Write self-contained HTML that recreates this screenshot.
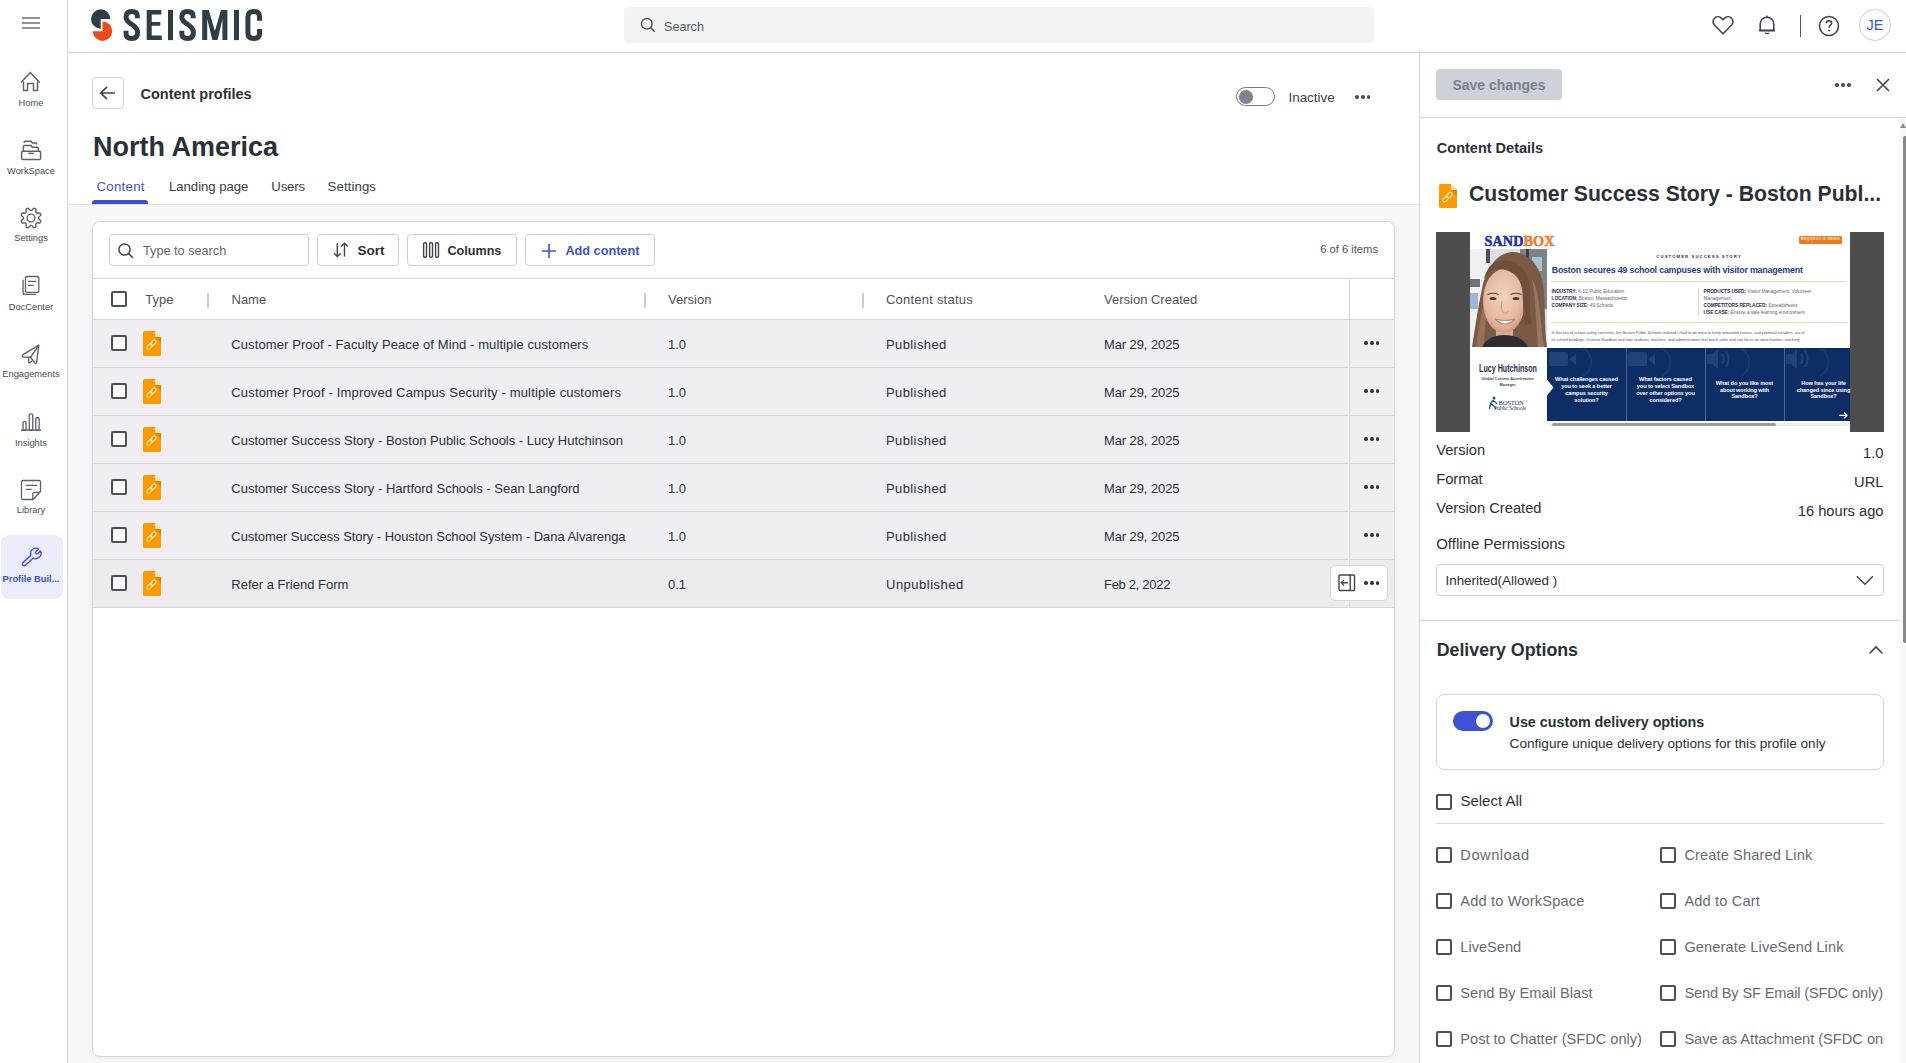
<!DOCTYPE html>
<html><head><meta charset="utf-8"><style>
html,body{margin:0;padding:0;width:1906px;height:1063px;overflow:hidden;background:#fff}
body{position:relative;font-family:"Liberation Sans", sans-serif}
.t{position:absolute;white-space:nowrap;line-height:1;font-family:"Liberation Sans", sans-serif}
svg{overflow:visible}
</style></head><body>
<div style="position:absolute;left:0px;top:0px;width:1906px;height:1063px;background:#ffffff"></div>
<div style="position:absolute;left:68px;top:205px;width:1351px;height:858px;background:#f7f8fa"></div>
<div style="position:absolute;left:67px;top:0px;width:1px;height:1063px;background:#d3d7de"></div>
<div style="position:absolute;left:68px;top:52px;width:1838px;height:1px;background:#d3d7de"></div>
<div style="position:absolute;left:68px;top:204px;width:1351px;height:1px;background:#dfe2e7"></div>
<div style="position:absolute;left:1419px;top:53px;width:1px;height:1010px;background:#d3d7de"></div>
<svg style="position:absolute;left:20px;top:12px" width="22" height="22" viewBox="0 0 22 22" fill="none"><path d="M2 6h18M2 11h18M2 16h18" stroke="#6b7178" stroke-width="1.4"/></svg>
<div style="position:absolute;left:1px;top:535px;width:62px;height:64px;background:#ebedfb;border-radius:8px"></div>
<svg style="position:absolute;left:19px;top:70px" width="24" height="24" viewBox="0 0 24 24" fill="none"><path d="M2 12.5L11.3 2.5L20.6 12.5" stroke="#5b626b" stroke-width="1.5" stroke-linejoin="miter"/><path d="M4.5 11.5V20.5H8.5V13.5H14.5V20.5H18.5V11.5" stroke="#5b626b" stroke-width="1.5"/></svg>
<svg style="position:absolute;left:19px;top:139px" width="24" height="24" viewBox="0 0 24 24" fill="none"><rect x="2.6" y="12.2" width="19" height="8.3" rx="1.3" stroke="#5b626b" stroke-width="1.5"/><path d="M9.3 14.4H14.8" stroke="#5b626b" stroke-width="1.5"/><path d="M4.4 12V7.5Q4.4 6.5 5.4 6.5H12.2L13.3 8.2H18.4Q19.2 8.2 19.2 9V12" stroke="#5b626b" stroke-width="1.4"/><path d="M5.2 4.1V3.3Q5.2 2.3 6.2 2.3H12.2L13.4 4H17Q17.7 4 17.9 5.6" stroke="#5b626b" stroke-width="1.4"/></svg>
<svg style="position:absolute;left:19px;top:206px" width="24" height="24" viewBox="0 0 24 24" fill="none"><path d="M12.00 4.45 L12.30 4.46 L12.59 4.47 L12.91 4.34 L13.29 3.83 L13.74 3.27 L14.22 2.74 L14.74 2.29 L15.17 2.25 L15.55 2.38 L15.92 2.53 L16.29 2.69 L16.65 2.87 L16.93 3.20 L16.98 3.88 L16.94 4.60 L16.86 5.31 L16.77 5.95 L16.90 6.26 L17.12 6.46 L17.34 6.66 L17.54 6.88 L17.74 7.10 L18.05 7.23 L18.69 7.14 L19.40 7.06 L20.12 7.02 L20.80 7.07 L21.13 7.35 L21.31 7.71 L21.47 8.08 L21.62 8.45 L21.75 8.83 L21.71 9.26 L21.26 9.78 L20.73 10.26 L20.17 10.71 L19.66 11.09 L19.53 11.41 L19.54 11.70 L19.55 12.00 L19.54 12.30 L19.53 12.59 L19.66 12.91 L20.17 13.29 L20.73 13.74 L21.26 14.22 L21.71 14.74 L21.75 15.17 L21.62 15.55 L21.47 15.92 L21.31 16.29 L21.13 16.65 L20.80 16.93 L20.12 16.98 L19.40 16.94 L18.69 16.86 L18.05 16.77 L17.74 16.90 L17.54 17.12 L17.34 17.34 L17.12 17.54 L16.90 17.74 L16.77 18.05 L16.86 18.69 L16.94 19.40 L16.98 20.12 L16.93 20.80 L16.65 21.13 L16.29 21.31 L15.92 21.47 L15.55 21.62 L15.17 21.75 L14.74 21.71 L14.22 21.26 L13.74 20.73 L13.29 20.17 L12.91 19.66 L12.59 19.53 L12.30 19.54 L12.00 19.55 L11.70 19.54 L11.41 19.53 L11.09 19.66 L10.71 20.17 L10.26 20.73 L9.78 21.26 L9.26 21.71 L8.83 21.75 L8.45 21.62 L8.08 21.47 L7.71 21.31 L7.35 21.13 L7.07 20.80 L7.02 20.12 L7.06 19.40 L7.14 18.69 L7.23 18.05 L7.10 17.74 L6.88 17.54 L6.66 17.34 L6.46 17.12 L6.26 16.90 L5.95 16.77 L5.31 16.86 L4.60 16.94 L3.88 16.98 L3.20 16.93 L2.87 16.65 L2.69 16.29 L2.53 15.92 L2.38 15.55 L2.25 15.17 L2.29 14.74 L2.74 14.22 L3.27 13.74 L3.83 13.29 L4.34 12.91 L4.47 12.59 L4.46 12.30 L4.45 12.00 L4.46 11.70 L4.47 11.41 L4.34 11.09 L3.83 10.71 L3.27 10.26 L2.74 9.78 L2.29 9.26 L2.25 8.83 L2.38 8.45 L2.53 8.08 L2.69 7.71 L2.87 7.35 L3.20 7.07 L3.88 7.02 L4.60 7.06 L5.31 7.14 L5.95 7.23 L6.26 7.10 L6.46 6.88 L6.66 6.66 L6.88 6.46 L7.10 6.26 L7.23 5.95 L7.14 5.31 L7.06 4.60 L7.02 3.88 L7.07 3.20 L7.35 2.87 L7.71 2.69 L8.08 2.53 L8.45 2.38 L8.83 2.25 L9.26 2.29 L9.78 2.74 L10.26 3.27 L10.71 3.83 L11.09 4.34 L11.41 4.47 L11.70 4.46Z" stroke="#5b626b" stroke-width="1.4" stroke-linejoin="round"/><circle cx="12" cy="12" r="3.9" stroke="#5b626b" stroke-width="1.4"/></svg>
<svg style="position:absolute;left:19px;top:273px" width="24" height="24" viewBox="0 0 24 24" fill="none"><rect x="6.5" y="3.5" width="13.3" height="15.8" rx="1.3" stroke="#5b626b" stroke-width="1.3"/><path d="M4.1 7.2V20.2Q4.1 21.4 5.3 21.4H16.5" stroke="#5b626b" stroke-width="1.3" stroke-linecap="round"/><path d="M9.5 8.4H16.6M9.5 12.4H14.3" stroke="#5b626b" stroke-width="1.3" stroke-linecap="round"/></svg>
<svg style="position:absolute;left:19px;top:342px" width="24" height="24" viewBox="0 0 24 24" fill="none"><path d="M19.8 3.2L3.9 12.6Q2.4 14.6 4.6 15.1L11.4 15.3L15.9 20.9Q17.1 22 17.6 20.4Z" stroke="#5b626b" stroke-width="1.4" stroke-linejoin="round"/><path d="M19.8 3.2L11.4 15.3" stroke="#5b626b" stroke-width="1.4"/><path d="M9.6 15.4V19.8Q9.9 21.2 11.2 20.4L13.4 18.7" stroke="#5b626b" stroke-width="1.4" stroke-linejoin="round"/></svg>
<svg style="position:absolute;left:19px;top:411px" width="24" height="24" viewBox="0 0 24 24" fill="none"><rect x="4.05" y="10.65" width="3.0" height="8.45" rx="0.9" stroke="#5b626b" stroke-width="1.3"/><rect x="10.25" y="2.85" width="3.5" height="16.25" rx="1.2" stroke="#5b626b" stroke-width="1.3"/><rect x="16.85" y="6.75" width="3.3" height="12.35" rx="1" stroke="#5b626b" stroke-width="1.3"/><path d="M2 19.1H22" stroke="#5b626b" stroke-width="1.5"/></svg>
<svg style="position:absolute;left:19px;top:478px" width="24" height="24" viewBox="0 0 24 24" fill="none"><path d="M4 2.5H20Q21.5 2.5 21.5 4V13.5L14.1 21.5H4Q2.5 21.5 2.5 20V4Q2.5 2.5 4 2.5Z" stroke="#5b626b" stroke-width="1.3" stroke-linejoin="round"/><path d="M13.8 21V15.8Q13.8 14.3 15.3 14.3H21" stroke="#5b626b" stroke-width="1.3"/><path d="M7.2 7.4H17.8M7.2 11.4H12.2" stroke="#5b626b" stroke-width="1.3" stroke-linecap="round"/></svg>
<svg style="position:absolute;left:19px;top:546px" width="24" height="24" viewBox="0 0 24 24" fill="none"><g transform="translate(16.8 7.4) rotate(137.8)"><path d="M4.88 -1.8 L15.7 -1.8 A1.8 1.8 0 0 1 15.7 1.8 L4.88 1.8 A5.2 5.2 0 0 1 -5.0 1.4 L-1.4 1.4 A1.4 1.4 0 1 0 -1.4 -1.4 L-5.0 -1.4 A5.2 5.2 0 0 1 4.88 -1.8 Z" stroke="#3d51d6" stroke-width="1.4" stroke-linejoin="round"/></g></svg>
<div class="t" style="left:31px;transform:translateX(-50%);top:99.13px;font-size:9.3px;color:#444b54;font-weight:normal;">Home</div>
<div class="t" style="left:31px;transform:translateX(-50%);top:166.73px;font-size:9.3px;color:#444b54;font-weight:normal;">WorkSpace</div>
<div class="t" style="left:31px;transform:translateX(-50%);top:234.23px;font-size:9.3px;color:#444b54;font-weight:normal;">Settings</div>
<div class="t" style="left:31px;transform:translateX(-50%);top:302.53px;font-size:9.3px;color:#444b54;font-weight:normal;">DocCenter</div>
<div class="t" style="left:31px;transform:translateX(-50%);top:370.33px;font-size:9.3px;color:#444b54;font-weight:normal;">Engagements</div>
<div class="t" style="left:31px;transform:translateX(-50%);top:438.63px;font-size:9.3px;color:#444b54;font-weight:normal;">Insights</div>
<div class="t" style="left:31px;transform:translateX(-50%);top:505.93px;font-size:9.3px;color:#444b54;font-weight:normal;">Library</div>
<div class="t" style="left:31px;transform:translateX(-50%);top:574.73px;font-size:9.3px;color:#3d51d6;font-weight:bold;">Profile Buil...</div>
<svg style="position:absolute;left:0px;top:0px" width="300" height="52" viewBox="0 0 300 52" fill="none">
<path d="M100.7 19 V28.7 A9.7 9.7 0 0 1 91 19 A9.7 9.7 0 0 1 110.4 19 Z" fill="#2f3d46"/>
<path d="M102.5 31.2 V21.5 A9.7 9.7 0 0 1 112.2 31.2 A9.7 9.7 0 0 1 92.8 31.2 Z" fill="#e8491f"/>
<g fill="#2f3d46">
<path d="M146.7 9.9 H161.3 V14.4 H151.7 V22 H160.3 V25.8 H151.7 V35.6 H161.8 V40.1 H146.7 Z"/>
<rect x="168" y="9.9" width="5" height="30.2"/>
<rect x="233.9" y="9.9" width="5.1" height="30.2"/>
<path d="M202.2 9.9 H208.8 L214.9 31 L221 9.9 H227.4 V40.1 H222.4 V19 L217.6 40.1 H212.4 L207.2 19 V40.1 H202.2 Z"/>
</g>
<g stroke="#2f3d46" stroke-width="5" fill="none">
<path d="M137.4 18.2 V16.5 C137.4 12.8 135 11.6 131.8 11.6 C128.4 11.6 126 13.2 126 17 C126 21 129 22.6 132 24.5 C135.2 26.5 137.6 28.2 137.6 32.6 C137.6 37 135 38.5 131.8 38.5 C128.4 38.5 126 37 126 33.2 V30.8"/>
<path d="M193.2 18.2 V16.5 C193.2 12.8 190.8 11.6 187.6 11.6 C184.2 11.6 181.8 13.2 181.8 17 C181.8 21 184.8 22.6 187.8 24.5 C191 26.5 193.4 28.2 193.4 32.6 C193.4 37 190.8 38.5 187.6 38.5 C184.2 38.5 181.8 37 181.8 33.2 V30.8"/>
<path d="M259.5 20.8 V16.5 C259.5 12.8 257 11.6 253.7 11.6 C250.4 11.6 247.9 12.8 247.9 17 V33 C247.9 37.2 250.4 38.5 253.7 38.5 C257 38.5 259.5 37.2 259.5 33.5 V29.1"/>
</g>
</svg>
<div style="position:absolute;left:624px;top:7px;width:750px;height:36px;background:#f2f3f5;border-radius:4px"></div>
<svg style="position:absolute;left:640px;top:17px" width="16" height="16" viewBox="0 0 16 16" fill="none"><circle cx="6.8" cy="6.8" r="5.3" stroke="#50575f" stroke-width="1.5"/><path d="M10.6 10.6L14.8 14.8" stroke="#50575f" stroke-width="1.6"/></svg>
<div class="t" style="left:664px;top:20.93px;font-size:12.6px;color:#50575f;font-weight:normal;">Search</div>
<svg style="position:absolute;left:1711px;top:13px" width="24" height="24" viewBox="0 0 24 24" fill="none"><path d="M12 20.8L3.6 12.3C1.5 10.2 1.6 6.8 3.8 4.9C5.8 3.2 8.8 3.5 10.6 5.4L12 6.8L13.4 5.4C15.2 3.5 18.2 3.2 20.2 4.9C22.4 6.8 22.5 10.2 20.4 12.3Z" stroke="#3f464e" stroke-width="1.6" stroke-linejoin="round"/></svg>
<svg style="position:absolute;left:1755px;top:13px" width="24" height="24" viewBox="0 0 24 24" fill="none"><path d="M5.2 17.5V11.2C5.2 7.3 8.1 4.2 12 4.2C15.9 4.2 18.8 7.3 18.8 11.2V17.5Z" stroke="#3f464e" stroke-width="1.6" stroke-linejoin="round"/><path d="M4 17.5H20" stroke="#3f464e" stroke-width="1.8"/><path d="M10.2 19.8C10.6 20.8 13.4 20.8 13.8 19.8" stroke="#3f464e" stroke-width="1.4"/><path d="M12 2.4V4.2" stroke="#3f464e" stroke-width="1.4"/></svg>
<div style="position:absolute;left:1800px;top:15px;width:1px;height:22px;background:#50575f"></div>
<svg style="position:absolute;left:1817px;top:14px" width="24" height="24" viewBox="0 0 24 24" fill="none"><circle cx="12" cy="12" r="9.5" stroke="#3f464e" stroke-width="1.6"/><path d="M9.4 9.3C9.4 7.8 10.6 6.8 12 6.8C13.5 6.8 14.6 7.8 14.6 9.2C14.6 11.2 12 11.3 12 13.6" stroke="#3f464e" stroke-width="1.6"/><circle cx="12" cy="16.6" r="1" fill="#3f464e"/></svg>
<div style="position:absolute;left:1859px;top:9px;width:30px;height:30px;border:1px solid #c9ced6;border-radius:50%"></div>
<div class="t" style="left:1875px;transform:translateX(-50%);top:18.33px;font-size:14.5px;color:#3d51d6;font-weight:normal;">JE</div>
<div style="position:absolute;left:92px;top:77px;width:30px;height:30px;border:1px solid #cfd4db;border-radius:4px"></div>
<svg style="position:absolute;left:97px;top:82px" width="22" height="22" viewBox="0 0 22 22" fill="none"><path d="M18 11H4.2M10 4.8L3.8 11L10 17.2" stroke="#3f464e" stroke-width="1.7"/></svg>
<div class="t" style="left:140.5px;top:86.63px;font-size:14.5px;color:#2b3038;font-weight:bold;">Content profiles</div>
<div style="position:absolute;left:1236px;top:87px;width:37px;height:17px;border:1.5px solid #757c86;border-radius:10px"></div>
<div style="position:absolute;left:1239px;top:90px;width:14px;height:14px;background:#7e858f;border-radius:50%"></div>
<div class="t" style="left:1288.5px;top:90.66px;font-size:13.4px;color:#3b4149;font-weight:normal;">Inactive</div>
<div style="position:absolute;left:1355.4px;top:95.2px;width:3.6px;height:3.6px;background:#4a5058;border-radius:50%"></div>
<div style="position:absolute;left:1361.2px;top:95.2px;width:3.6px;height:3.6px;background:#4a5058;border-radius:50%"></div>
<div style="position:absolute;left:1366.9px;top:95.2px;width:3.6px;height:3.6px;background:#4a5058;border-radius:50%"></div>
<div class="t" style="left:93px;top:133.74px;font-size:27px;color:#2b3038;font-weight:bold;">North America</div>
<div class="t" style="left:96.5px;top:180.23px;font-size:13.2px;color:#3d51d6;font-weight:normal;letter-spacing:0.3px">Content</div>
<div class="t" style="left:169px;top:180.23px;font-size:13.2px;color:#3b4149;font-weight:normal;letter-spacing:-0.05px">Landing page</div>
<div class="t" style="left:271.3px;top:180.23px;font-size:13.2px;color:#3b4149;font-weight:normal;letter-spacing:-0.15px">Users</div>
<div class="t" style="left:327.6px;top:180.23px;font-size:13.2px;color:#3b4149;font-weight:normal;letter-spacing:0.1px">Settings</div>
<div style="position:absolute;left:92px;top:200px;width:56px;height:4px;background:#3d51d6;border-radius:3px 3px 0 0"></div>
<div style="position:absolute;left:92px;top:221px;width:1301px;height:834px;background:#fff;border:1px solid #d3d7de;border-radius:8px;box-shadow:0 1px 6px rgba(20,30,50,0.07)"></div>
<div style="position:absolute;left:109px;top:234px;width:198px;height:30px;border:1px solid #c9ced5;border-radius:4px"></div>
<svg style="position:absolute;left:117px;top:242px" width="18" height="18" viewBox="0 0 18 18" fill="none"><circle cx="7.5" cy="7.5" r="5.6" stroke="#40474f" stroke-width="1.5"/><path d="M11.6 11.6L15.8 15.8" stroke="#40474f" stroke-width="1.6"/></svg>
<div class="t" style="left:143px;top:245.25px;font-size:12.7px;color:#5f6670;font-weight:normal;">Type to search</div>
<div style="position:absolute;left:317px;top:234px;width:80px;height:30px;border:1px solid #c9ced5;border-radius:4px"></div>
<svg style="position:absolute;left:332px;top:241px" width="18" height="18" viewBox="0 0 18 18" fill="none"><path d="M5.3 2.2V15.6M1.9 12.2L5.3 15.6L8.7 12.2" stroke="#3f464e" stroke-width="1.4"/><path d="M12.5 15.6V2.2M9.1 5.6L12.5 2.2L15.9 5.6" stroke="#3f464e" stroke-width="1.4"/></svg>
<div class="t" style="left:357.4px;top:243.77px;font-size:13.5px;color:#2b3038;font-weight:bold;">Sort</div>
<div style="position:absolute;left:407px;top:234px;width:108px;height:30px;border:1px solid #c9ced5;border-radius:4px"></div>
<svg style="position:absolute;left:422px;top:241px" width="18" height="18" viewBox="0 0 18 18" fill="none"><rect x="1.6" y="1.7" width="2.9" height="14.6" rx="1.2" stroke="#3f464e" stroke-width="1.4"/><rect x="7.6" y="1.7" width="2.9" height="14.6" rx="1.2" stroke="#3f464e" stroke-width="1.4"/><rect x="13.6" y="1.7" width="2.9" height="14.6" rx="1.2" stroke="#3f464e" stroke-width="1.4"/></svg>
<div class="t" style="left:447.5px;top:245.13px;font-size:12.6px;color:#2b3038;font-weight:bold;">Columns</div>
<div style="position:absolute;left:525px;top:234px;width:128px;height:30px;border:1px solid #c9ced5;border-radius:4px"></div>
<svg style="position:absolute;left:540px;top:242px" width="18" height="18" viewBox="0 0 18 18" fill="none"><path d="M9 2V16M2 9H16" stroke="#3d51d6" stroke-width="1.6"/></svg>
<div class="t" style="left:565.4px;top:245.05px;font-size:12.7px;color:#3d51d6;font-weight:bold;">Add content</div>
<div class="t" style="right:528px;top:244.12px;font-size:11.2px;color:#4a5058;font-weight:normal;">6 of 6 items</div>
<div style="position:absolute;left:93px;top:278px;width:1301px;height:1px;background:#d3d7de"></div>
<div style="position:absolute;left:111px;top:291px;width:12px;height:12px;border:2px solid #4a5058;border-radius:2px;background:#fff"></div>
<div class="t" style="left:145.3px;top:292.90px;font-size:13px;color:#4c535c;font-weight:normal;">Type</div>
<div style="position:absolute;left:207px;top:293px;width:2px;height:15px;background:#c9cdd3"></div>
<div class="t" style="left:231.5px;top:292.90px;font-size:13px;color:#4c535c;font-weight:normal;">Name</div>
<div style="position:absolute;left:644px;top:293px;width:2px;height:15px;background:#c9cdd3"></div>
<div class="t" style="left:668px;top:292.90px;font-size:13px;color:#4c535c;font-weight:normal;">Version</div>
<div style="position:absolute;left:862px;top:293px;width:2px;height:15px;background:#c9cdd3"></div>
<div class="t" style="left:886px;top:292.90px;font-size:13px;color:#4c535c;font-weight:normal;letter-spacing:0.22px">Content status</div>
<div class="t" style="left:1104px;top:292.90px;font-size:13px;color:#4c535c;font-weight:normal;">Version Created</div>
<div style="position:absolute;left:93px;top:319px;width:1301px;height:1px;background:#d3d7de"></div>
<div style="position:absolute;left:1349px;top:279px;width:1px;height:329px;background:#d3d7de"></div>
<div style="position:absolute;left:93px;top:320px;width:1301px;height:47px;background:#eeeef3"></div>
<div style="position:absolute;left:93px;top:367px;width:1301px;height:1px;background:#d3d7de"></div>
<div style="position:absolute;left:111px;top:335px;width:12px;height:12px;border:2px solid #4a5058;border-radius:2px;background:#fff"></div>
<svg style="position:absolute;left:143px;top:331px" width="18" height="25" viewBox="0 0 18 25" fill="none"><path d="M1.5 0H12L18 6V23.5Q18 25 16.5 25H1.5Q0 25 0 23.5V1.5Q0 0 1.5 0Z" fill="#ff9a00"/>
<path d="M12 0L18 6H12Z" fill="#ffe3b8"/><path d="M12 6H18L18 12Z" fill="#d98200" opacity="0.9"/>
<g stroke="#ffe9c8" stroke-width="1.1" fill="none" transform="translate(8.4 13.7) rotate(-45)">
<rect x="-6" y="-1.8" width="6.6" height="3.6" rx="1.8"/><rect x="-0.6" y="-1.8" width="6.6" height="3.6" rx="1.8"/></g></svg>
<div class="t" style="left:231.3px;top:337.80px;font-size:13px;color:#2b3038;font-weight:normal;letter-spacing:0.1px">Customer Proof - Faculty Peace of Mind - multiple customers</div>
<div class="t" style="left:668px;top:337.80px;font-size:13px;color:#2b3038;font-weight:normal;">1.0</div>
<div class="t" style="left:886px;top:337.80px;font-size:13px;color:#2b3038;font-weight:normal;letter-spacing:0.4px">Published</div>
<div class="t" style="left:1104px;top:337.80px;font-size:13px;color:#2b3038;font-weight:normal;letter-spacing:-0.1px">Mar 29, 2025</div>
<div style="position:absolute;left:1364.4px;top:341.3px;width:3.6px;height:3.6px;background:#2f353c;border-radius:50%"></div>
<div style="position:absolute;left:1370.2px;top:341.3px;width:3.6px;height:3.6px;background:#2f353c;border-radius:50%"></div>
<div style="position:absolute;left:1375.8px;top:341.3px;width:3.6px;height:3.6px;background:#2f353c;border-radius:50%"></div>
<div style="position:absolute;left:93px;top:368px;width:1301px;height:47px;background:#eeeef3"></div>
<div style="position:absolute;left:93px;top:415px;width:1301px;height:1px;background:#d3d7de"></div>
<div style="position:absolute;left:111px;top:383px;width:12px;height:12px;border:2px solid #4a5058;border-radius:2px;background:#fff"></div>
<svg style="position:absolute;left:143px;top:379px" width="18" height="25" viewBox="0 0 18 25" fill="none"><path d="M1.5 0H12L18 6V23.5Q18 25 16.5 25H1.5Q0 25 0 23.5V1.5Q0 0 1.5 0Z" fill="#ff9a00"/>
<path d="M12 0L18 6H12Z" fill="#ffe3b8"/><path d="M12 6H18L18 12Z" fill="#d98200" opacity="0.9"/>
<g stroke="#ffe9c8" stroke-width="1.1" fill="none" transform="translate(8.4 13.7) rotate(-45)">
<rect x="-6" y="-1.8" width="6.6" height="3.6" rx="1.8"/><rect x="-0.6" y="-1.8" width="6.6" height="3.6" rx="1.8"/></g></svg>
<div class="t" style="left:231.3px;top:385.80px;font-size:13px;color:#2b3038;font-weight:normal;letter-spacing:0.17px">Customer Proof - Improved Campus Security - multiple customers</div>
<div class="t" style="left:668px;top:385.80px;font-size:13px;color:#2b3038;font-weight:normal;">1.0</div>
<div class="t" style="left:886px;top:385.80px;font-size:13px;color:#2b3038;font-weight:normal;letter-spacing:0.4px">Published</div>
<div class="t" style="left:1104px;top:385.80px;font-size:13px;color:#2b3038;font-weight:normal;letter-spacing:-0.1px">Mar 29, 2025</div>
<div style="position:absolute;left:1364.4px;top:389.3px;width:3.6px;height:3.6px;background:#2f353c;border-radius:50%"></div>
<div style="position:absolute;left:1370.2px;top:389.3px;width:3.6px;height:3.6px;background:#2f353c;border-radius:50%"></div>
<div style="position:absolute;left:1375.8px;top:389.3px;width:3.6px;height:3.6px;background:#2f353c;border-radius:50%"></div>
<div style="position:absolute;left:93px;top:416px;width:1301px;height:47px;background:#eeeef3"></div>
<div style="position:absolute;left:93px;top:463px;width:1301px;height:1px;background:#d3d7de"></div>
<div style="position:absolute;left:111px;top:431px;width:12px;height:12px;border:2px solid #4a5058;border-radius:2px;background:#fff"></div>
<svg style="position:absolute;left:143px;top:427px" width="18" height="25" viewBox="0 0 18 25" fill="none"><path d="M1.5 0H12L18 6V23.5Q18 25 16.5 25H1.5Q0 25 0 23.5V1.5Q0 0 1.5 0Z" fill="#ff9a00"/>
<path d="M12 0L18 6H12Z" fill="#ffe3b8"/><path d="M12 6H18L18 12Z" fill="#d98200" opacity="0.9"/>
<g stroke="#ffe9c8" stroke-width="1.1" fill="none" transform="translate(8.4 13.7) rotate(-45)">
<rect x="-6" y="-1.8" width="6.6" height="3.6" rx="1.8"/><rect x="-0.6" y="-1.8" width="6.6" height="3.6" rx="1.8"/></g></svg>
<div class="t" style="left:231.3px;top:433.80px;font-size:13px;color:#2b3038;font-weight:normal;">Customer Success Story - Boston Public Schools - Lucy Hutchinson</div>
<div class="t" style="left:668px;top:433.80px;font-size:13px;color:#2b3038;font-weight:normal;">1.0</div>
<div class="t" style="left:886px;top:433.80px;font-size:13px;color:#2b3038;font-weight:normal;letter-spacing:0.4px">Published</div>
<div class="t" style="left:1104px;top:433.80px;font-size:13px;color:#2b3038;font-weight:normal;letter-spacing:-0.1px">Mar 28, 2025</div>
<div style="position:absolute;left:1364.4px;top:437.3px;width:3.6px;height:3.6px;background:#2f353c;border-radius:50%"></div>
<div style="position:absolute;left:1370.2px;top:437.3px;width:3.6px;height:3.6px;background:#2f353c;border-radius:50%"></div>
<div style="position:absolute;left:1375.8px;top:437.3px;width:3.6px;height:3.6px;background:#2f353c;border-radius:50%"></div>
<div style="position:absolute;left:93px;top:464px;width:1301px;height:47px;background:#eeeef3"></div>
<div style="position:absolute;left:93px;top:511px;width:1301px;height:1px;background:#d3d7de"></div>
<div style="position:absolute;left:111px;top:479px;width:12px;height:12px;border:2px solid #4a5058;border-radius:2px;background:#fff"></div>
<svg style="position:absolute;left:143px;top:475px" width="18" height="25" viewBox="0 0 18 25" fill="none"><path d="M1.5 0H12L18 6V23.5Q18 25 16.5 25H1.5Q0 25 0 23.5V1.5Q0 0 1.5 0Z" fill="#ff9a00"/>
<path d="M12 0L18 6H12Z" fill="#ffe3b8"/><path d="M12 6H18L18 12Z" fill="#d98200" opacity="0.9"/>
<g stroke="#ffe9c8" stroke-width="1.1" fill="none" transform="translate(8.4 13.7) rotate(-45)">
<rect x="-6" y="-1.8" width="6.6" height="3.6" rx="1.8"/><rect x="-0.6" y="-1.8" width="6.6" height="3.6" rx="1.8"/></g></svg>
<div class="t" style="left:231.3px;top:481.80px;font-size:13px;color:#2b3038;font-weight:normal;">Customer Success Story - Hartford Schools - Sean Langford</div>
<div class="t" style="left:668px;top:481.80px;font-size:13px;color:#2b3038;font-weight:normal;">1.0</div>
<div class="t" style="left:886px;top:481.80px;font-size:13px;color:#2b3038;font-weight:normal;letter-spacing:0.4px">Published</div>
<div class="t" style="left:1104px;top:481.80px;font-size:13px;color:#2b3038;font-weight:normal;letter-spacing:-0.1px">Mar 29, 2025</div>
<div style="position:absolute;left:1364.4px;top:485.3px;width:3.6px;height:3.6px;background:#2f353c;border-radius:50%"></div>
<div style="position:absolute;left:1370.2px;top:485.3px;width:3.6px;height:3.6px;background:#2f353c;border-radius:50%"></div>
<div style="position:absolute;left:1375.8px;top:485.3px;width:3.6px;height:3.6px;background:#2f353c;border-radius:50%"></div>
<div style="position:absolute;left:93px;top:512px;width:1301px;height:47px;background:#eeeef3"></div>
<div style="position:absolute;left:93px;top:559px;width:1301px;height:1px;background:#d3d7de"></div>
<div style="position:absolute;left:111px;top:527px;width:12px;height:12px;border:2px solid #4a5058;border-radius:2px;background:#fff"></div>
<svg style="position:absolute;left:143px;top:523px" width="18" height="25" viewBox="0 0 18 25" fill="none"><path d="M1.5 0H12L18 6V23.5Q18 25 16.5 25H1.5Q0 25 0 23.5V1.5Q0 0 1.5 0Z" fill="#ff9a00"/>
<path d="M12 0L18 6H12Z" fill="#ffe3b8"/><path d="M12 6H18L18 12Z" fill="#d98200" opacity="0.9"/>
<g stroke="#ffe9c8" stroke-width="1.1" fill="none" transform="translate(8.4 13.7) rotate(-45)">
<rect x="-6" y="-1.8" width="6.6" height="3.6" rx="1.8"/><rect x="-0.6" y="-1.8" width="6.6" height="3.6" rx="1.8"/></g></svg>
<div class="t" style="left:231.3px;top:529.80px;font-size:13px;color:#2b3038;font-weight:normal;letter-spacing:-0.05px">Customer Success Story - Houston School System - Dana Alvarenga</div>
<div class="t" style="left:668px;top:529.80px;font-size:13px;color:#2b3038;font-weight:normal;">1.0</div>
<div class="t" style="left:886px;top:529.80px;font-size:13px;color:#2b3038;font-weight:normal;letter-spacing:0.4px">Published</div>
<div class="t" style="left:1104px;top:529.80px;font-size:13px;color:#2b3038;font-weight:normal;letter-spacing:-0.1px">Mar 29, 2025</div>
<div style="position:absolute;left:1364.4px;top:533.3px;width:3.6px;height:3.6px;background:#2f353c;border-radius:50%"></div>
<div style="position:absolute;left:1370.2px;top:533.3px;width:3.6px;height:3.6px;background:#2f353c;border-radius:50%"></div>
<div style="position:absolute;left:1375.8px;top:533.3px;width:3.6px;height:3.6px;background:#2f353c;border-radius:50%"></div>
<div style="position:absolute;left:93px;top:560px;width:1301px;height:47px;background:#ececef"></div>
<div style="position:absolute;left:93px;top:607px;width:1301px;height:1px;background:#d3d7de"></div>
<div style="position:absolute;left:111px;top:575px;width:12px;height:12px;border:2px solid #4a5058;border-radius:2px;background:#fff"></div>
<svg style="position:absolute;left:143px;top:571px" width="18" height="25" viewBox="0 0 18 25" fill="none"><path d="M1.5 0H12L18 6V23.5Q18 25 16.5 25H1.5Q0 25 0 23.5V1.5Q0 0 1.5 0Z" fill="#ff9a00"/>
<path d="M12 0L18 6H12Z" fill="#ffe3b8"/><path d="M12 6H18L18 12Z" fill="#d98200" opacity="0.9"/>
<g stroke="#ffe9c8" stroke-width="1.1" fill="none" transform="translate(8.4 13.7) rotate(-45)">
<rect x="-6" y="-1.8" width="6.6" height="3.6" rx="1.8"/><rect x="-0.6" y="-1.8" width="6.6" height="3.6" rx="1.8"/></g></svg>
<div class="t" style="left:231.3px;top:577.80px;font-size:13px;color:#2b3038;font-weight:normal;">Refer a Friend Form</div>
<div class="t" style="left:668px;top:577.80px;font-size:13px;color:#2b3038;font-weight:normal;">0.1</div>
<div class="t" style="left:886px;top:577.80px;font-size:13px;color:#2b3038;font-weight:normal;letter-spacing:0.5px">Unpublished</div>
<div class="t" style="left:1104px;top:577.80px;font-size:13px;color:#2b3038;font-weight:normal;letter-spacing:-0.3px">Feb 2, 2022</div>
<div style="position:absolute;left:1348px;top:320px;width:1px;height:288px;background:#ffffff"></div>
<div style="position:absolute;left:1349px;top:320px;width:1px;height:288px;background:#d3d7de"></div>
<div style="position:absolute;left:1330px;top:565px;width:56px;height:34px;background:#fff;border:1px solid #d3d7de;border-radius:5px"></div>
<svg style="position:absolute;left:1338px;top:574px" width="18" height="18" viewBox="0 0 18 18" fill="none"><rect x="1" y="1" width="15.5" height="15.5" rx="1" stroke="#3f464e" stroke-width="1.4"/><path d="M12.2 1V16.5" stroke="#3f464e" stroke-width="1.4"/><path d="M10 8.75H3.5M6 6L3.3 8.75L6 11.5" stroke="#3f464e" stroke-width="1.3"/></svg>
<div style="position:absolute;left:1364.4px;top:581.2px;width:3.6px;height:3.6px;background:#2f353c;border-radius:50%"></div>
<div style="position:absolute;left:1370.2px;top:581.2px;width:3.6px;height:3.6px;background:#2f353c;border-radius:50%"></div>
<div style="position:absolute;left:1375.8px;top:581.2px;width:3.6px;height:3.6px;background:#2f353c;border-radius:50%"></div>
<div style="position:absolute;left:1420px;top:53px;width:486px;height:1010px;background:#fff"></div>
<div style="position:absolute;left:1436px;top:69px;width:126px;height:31px;background:#cdd1d8;border-radius:4px"></div>
<div class="t" style="left:1499px;transform:translateX(-50%);top:78.99px;font-size:13.95px;color:#7b828c;font-weight:bold;">Save changes</div>
<div style="position:absolute;left:1835.4px;top:83.1px;width:3.6px;height:3.6px;background:#4a5058;border-radius:50%"></div>
<div style="position:absolute;left:1841.2px;top:83.1px;width:3.6px;height:3.6px;background:#4a5058;border-radius:50%"></div>
<div style="position:absolute;left:1847.0px;top:83.1px;width:3.6px;height:3.6px;background:#4a5058;border-radius:50%"></div>
<svg style="position:absolute;left:1875px;top:77px" width="16" height="16" viewBox="0 0 16 16" fill="none"><path d="M2 2L14 14M14 2L2 14" stroke="#3f464e" stroke-width="1.6"/></svg>
<div style="position:absolute;left:1420px;top:117px;width:486px;height:1px;background:#d3d7de"></div>
<div style="position:absolute;left:1900px;top:118px;width:6px;height:945px;background:#f8f8f9"></div>
<svg style="position:absolute;left:1900px;top:121px" width="6" height="8" viewBox="0 0 6 8" fill="none"><path d="M3 2L6 7H0Z" fill="#8a8a8a"/></svg>
<div style="position:absolute;left:1903px;top:136px;width:3px;height:507px;background:#888;border-radius:2px 0 0 2px"></div>
<div class="t" style="left:1436.8px;top:140.53px;font-size:14.5px;color:#2b3038;font-weight:bold;">Content Details</div>
<svg style="position:absolute;left:1439px;top:184px" width="18" height="24" viewBox="0 0 18 24" fill="none"><path d="M1.5 0H12L18 6V22.5Q18 24 16.5 24H1.5Q0 24 0 22.5V1.5Q0 0 1.5 0Z" fill="#ff9a00"/>
<path d="M12 0L18 6H12Z" fill="#ffe3b8"/><path d="M12 6H18L18 12Z" fill="#d98200" opacity="0.9"/>
<g stroke="#ffe9c8" stroke-width="1.1" fill="none" transform="translate(8.4 13.2) rotate(-45)">
<rect x="-6" y="-1.8" width="6.6" height="3.6" rx="1.8"/><rect x="-0.6" y="-1.8" width="6.6" height="3.6" rx="1.8"/></g></svg>
<div class="t" style="left:1469px;top:183.35px;font-size:21.2px;color:#2b3038;font-weight:bold;">Customer Success Story - Boston Publ...</div>
<div style="position:absolute;left:1436px;top:232px;width:448px;height:200px;background:#4d4d4d"></div>
<div style="position:absolute;left:1470px;top:232px;width:380px;height:200px;background:#ffffff"></div>
<div class="t" style="left:1484.5px;top:233.6px;font-size:14.2px;font-weight:bold;font-family:'Liberation Serif';letter-spacing:0.1px;-webkit-text-stroke:0.45px currentColor;transform:scaleX(1.0);transform-origin:left"><span style="color:#1b2fa6;-webkit-text-stroke:0.5px #1b2fa6">SAND</span><span style="color:#f07a2a;-webkit-text-stroke:0.5px #f07a2a">BOX</span></div>
<div style="position:absolute;left:1799px;top:235.5px;width:43px;height:8.7px;background:#f07a22;border-radius:1.5px"></div>
<div class="t" style="left:1820.5px;transform:translateX(-50%);top:238.35px;font-size:3.6px;color:#ffe9d8;font-weight:bold;letter-spacing:0.5px">REQUEST A DEMO</div>
<svg style="position:absolute;left:1470px;top:249px;filter:blur(0.35px)" width="77" height="98" viewBox="0 0 77 98">
<defs><radialGradient id="face" cx="0.48" cy="0.42" r="0.62"><stop offset="0" stop-color="#f3d3c0"/><stop offset="0.7" stop-color="#e6b79f"/><stop offset="1" stop-color="#c9967c"/></radialGradient></defs>
<rect width="77" height="98" fill="#dcdfe3"/>
<rect x="0" y="0" width="18" height="98" fill="#eef0f2"/>
<rect x="0" y="44" width="8" height="16" fill="#9fb6d8"/>
<rect x="0" y="30" width="10" height="8" fill="#6f7378"/>
<rect x="50" y="0" width="27" height="60" fill="#7f8388"/>
<rect x="56" y="0" width="3" height="30" fill="#3c3f44"/>
<rect x="62" y="8" width="10" height="14" fill="#a9c3cf"/>
<rect x="16" y="0" width="4" height="14" fill="#4e5258"/>
<path d="M2 98 C5 80 8 58 12 40 C16 18 28 4 42 3 C58 3 70 16 73 36 C76 56 74 80 77 98 Z" fill="#7a5a44"/>
<path d="M62 30 C70 44 70 70 74 98 L68 98 C66 74 66 50 62 30Z" fill="#987660"/>
<path d="M6 98 C8 84 10 70 13 58 L17 64 C15 76 14 88 14 98Z" fill="#957159"/>
<rect x="26" y="74" width="17" height="16" fill="#dcae95"/>
<ellipse cx="34" cy="52" rx="21" ry="32" fill="url(#face)"/>
<path d="M24 14 C40 6 58 16 60 40 C61 52 58 62 62 74 L55 76 C52 64 54 52 52 40 C50 28 42 20 28 20 C22 20 18 24 14 30 C16 22 20 16 24 14Z" fill="#6d4f3b"/>
<ellipse cx="23" cy="49.5" rx="3.4" ry="1.6" fill="#4a3a36"/>
<ellipse cx="46" cy="49.5" rx="3.4" ry="1.6" fill="#4a3a36"/>
<path d="M17.5 45.5 Q23 43 28.5 45.5 M40.5 45.5 Q46 43 51.5 45.5" stroke="#5e4030" stroke-width="1.2" fill="none"/>
<path d="M32 52 Q30 62 34 64 Q38 64 38 62" stroke="#cf9f88" stroke-width="1.2" fill="none"/>
<path d="M25 70 Q35 80 45 70 Q35 73 25 70Z" fill="#ffffff" stroke="#c77f78" stroke-width="1.1"/>
<path d="M12 98 C16 90 24 86 34 86 C46 86 54 90 58 98Z" fill="#2e2e31"/>
</svg>
<div class="t" style="left:1699px;transform:translateX(-50%);top:254.96px;font-size:4.3px;color:#2c3440;font-weight:bold;letter-spacing:1.05px">CUSTOMER SUCCESS STORY</div>
<div class="t" style="left:1551.7px;top:265.87px;font-size:8.9px;color:#1f3d7a;font-weight:bold;letter-spacing:-0.2px">Boston secures 49 school campuses with visitor management</div>
<div style="position:absolute;left:1551px;top:281.3px;width:296px;height:1px;background:#f8cfae"></div>
<div style="position:absolute;left:1551px;top:322px;width:296px;height:1px;background:#f8cfae"></div>
<div style="position:absolute;left:1698.3px;top:287.5px;width:1px;height:28px;background:#f8cfae"></div>
<div class="t" style="left:1551.5px;top:289.94px;font-size:4.8px;color:#5f6673;letter-spacing:-0.05px"><b style="color:#1f2c4a">INDUSTRY:</b> K-12 Public Education</div>
<div class="t" style="left:1551.5px;top:296.84px;font-size:4.8px;color:#5f6673;letter-spacing:-0.05px"><b style="color:#1f2c4a">LOCATION:</b> Boston, Massachusetts</div>
<div class="t" style="left:1551.5px;top:303.74px;font-size:4.8px;color:#5f6673;letter-spacing:-0.05px"><b style="color:#1f2c4a">COMPANY SIZE:</b> 49 Schools</div>
<div class="t" style="left:1703.6px;top:289.94px;font-size:4.8px;color:#5f6673;letter-spacing:-0.05px"><b style="color:#1f2c4a">PRODUCTS USED:</b> Visitor Management, Volunteer</div>
<div class="t" style="left:1703.6px;top:296.84px;font-size:4.8px;color:#5f6673;font-weight:normal;">Management</div>
<div class="t" style="left:1703.6px;top:303.74px;font-size:4.8px;color:#5f6673;letter-spacing:-0.05px"><b style="color:#1f2c4a">COMPETITORS REPLACED:</b> Spreadsheets</div>
<div class="t" style="left:1703.6px;top:310.54px;font-size:4.8px;color:#5f6673;letter-spacing:-0.05px"><b style="color:#1f2c4a">USE CASE:</b> Ensure a safe learning environment</div>
<div class="t" style="left:1551.5px;top:331.03px;font-size:4.1px;color:#4f5866;font-weight:normal;letter-spacing:-0.08px">In this era of school safety concerns, the Boston Public Schools realized it had to do more to keep unwanted visitors, and potential intruders, out of</div>
<div class="t" style="left:1551.5px;top:337.83px;font-size:4.1px;color:#4f5866;font-weight:normal;letter-spacing:-0.08px">its school buildings. It chose Sandbox and now students, teachers, and administrators feel much safer and can focus on what matters: teaching.</div>
<div style="position:absolute;left:1547px;top:348px;width:303px;height:73px;background:#0c2d66"></div>
<div style="position:absolute;left:1626px;top:348px;width:1px;height:73px;background:#4a6a9a"></div>
<div style="position:absolute;left:1705px;top:348px;width:1px;height:73px;background:#4a6a9a"></div>
<div style="position:absolute;left:1784px;top:348px;width:1px;height:73px;background:#4a6a9a"></div>
<svg style="position:absolute;left:1547px;top:348px" width="303" height="73" viewBox="0 0 303 73">
<g fill="#27487e" opacity="0.85">
<rect x="2" y="4" width="19" height="14" rx="2"/><path d="M22 11L29 6V17Z"/>
<rect x="81" y="4" width="19" height="14" rx="2"/><path d="M101 11L108 6V17Z"/>
<path d="M160 6H165L171 1V21L165 16H160Z"/><path d="M239 6H244L250 1V21L244 16H239Z"/>
</g>
<g stroke="#27487e" stroke-width="2" fill="none" opacity="0.85">
<path d="M175 6Q178 11 175 16M179 3Q184 11 179 19"/><path d="M254 6Q257 11 254 16M258 3Q263 11 258 19"/>
<path d="M36 0A16 16 0 0 1 36 28" opacity="0.5"/><path d="M115 0A16 16 0 0 1 115 28" opacity="0.5"/><path d="M194 0A16 16 0 0 1 194 28" opacity="0.5"/><path d="M273 0A16 16 0 0 1 273 28" opacity="0.5"/>
</g>
<path d="M0 31.6L6.5 39.6L0 47.6Z" fill="#ffffff"/>
<path d="M292 67.4H300M297 64.4L300 67.4L297 70.4" stroke="#fff" stroke-width="1.2" fill="none"/>
</svg>
<div class="t" style="left:1586.5px;transform:translateX(-50%);top:377.26px;font-size:5.6px;color:#ffffff;font-weight:bold;letter-spacing:-0.1px">What challenges caused</div>
<div class="t" style="left:1586.5px;transform:translateX(-50%);top:384.06px;font-size:5.6px;color:#ffffff;font-weight:bold;letter-spacing:-0.1px">you to seek a better</div>
<div class="t" style="left:1586.5px;transform:translateX(-50%);top:390.86px;font-size:5.6px;color:#ffffff;font-weight:bold;letter-spacing:-0.1px">campus security</div>
<div class="t" style="left:1586.5px;transform:translateX(-50%);top:397.66px;font-size:5.6px;color:#ffffff;font-weight:bold;letter-spacing:-0.1px">solution?</div>
<div class="t" style="left:1665.5px;transform:translateX(-50%);top:377.26px;font-size:5.6px;color:#ffffff;font-weight:bold;letter-spacing:-0.1px">What factors caused</div>
<div class="t" style="left:1665.5px;transform:translateX(-50%);top:384.06px;font-size:5.6px;color:#ffffff;font-weight:bold;letter-spacing:-0.1px">you to select Sandbox</div>
<div class="t" style="left:1665.5px;transform:translateX(-50%);top:390.86px;font-size:5.6px;color:#ffffff;font-weight:bold;letter-spacing:-0.1px">over other options you</div>
<div class="t" style="left:1665.5px;transform:translateX(-50%);top:397.66px;font-size:5.6px;color:#ffffff;font-weight:bold;letter-spacing:-0.1px">considered?</div>
<div class="t" style="left:1744.5px;transform:translateX(-50%);top:380.86px;font-size:5.6px;color:#ffffff;font-weight:bold;letter-spacing:-0.1px">What do you like most</div>
<div class="t" style="left:1744.5px;transform:translateX(-50%);top:387.66px;font-size:5.6px;color:#ffffff;font-weight:bold;letter-spacing:-0.1px">about working with</div>
<div class="t" style="left:1744.5px;transform:translateX(-50%);top:394.46px;font-size:5.6px;color:#ffffff;font-weight:bold;letter-spacing:-0.1px">Sandbox?</div>
<div class="t" style="left:1823.5px;transform:translateX(-50%);top:380.86px;font-size:5.6px;color:#ffffff;font-weight:bold;letter-spacing:-0.1px">How has your life</div>
<div class="t" style="left:1823.5px;transform:translateX(-50%);top:387.66px;font-size:5.6px;color:#ffffff;font-weight:bold;letter-spacing:-0.1px">changed since using</div>
<div class="t" style="left:1823.5px;transform:translateX(-50%);top:394.46px;font-size:5.6px;color:#ffffff;font-weight:bold;letter-spacing:-0.1px">Sandbox?</div>
<div style="position:absolute;left:1549px;top:422.5px;width:300px;height:3px;background:#eeeeee"></div>
<div style="position:absolute;left:1552px;top:422.5px;width:224px;height:3px;background:#9c9c9c;border-radius:2px"></div>
<div class="t" style="left:1507.5px;top:364.2px;font-size:10.2px;font-weight:bold;color:#1c2c4c;transform:translateX(-50%) scaleX(0.7)">Lucy Hutchinson</div>
<div class="t" style="left:1507.5px;transform:translateX(-50%);top:377.00px;font-size:3.9px;color:#3b4455;font-weight:bold;">Global Content Acceleration</div>
<div class="t" style="left:1507.5px;transform:translateX(-50%);top:382.70px;font-size:3.9px;color:#3b4455;font-weight:bold;">Manager</div>
<div class="t" style="left:1511px;transform:translateX(-50%);top:399.91px;font-size:6.6px;color:#1f3470;font-weight:normal;font-family:'Liberation Serif';letter-spacing:-0.2px">BOSTON</div>
<div class="t" style="left:1510px;transform:translateX(-50%);top:406.09px;font-size:5.8px;color:#1f3470;font-weight:normal;font-family:'Liberation Serif';letter-spacing:-0.2px">Public Schools</div>
<svg style="position:absolute;left:1488px;top:396px" width="10" height="14" viewBox="0 0 10 14"><circle cx="6" cy="2" r="1.6" fill="#2557b0"/><path d="M6 4Q2 6 1.5 13M5 5Q8 6 9 8M3 8Q6 9 8 13" stroke="#2557b0" stroke-width="1.4" fill="none"/></svg>
<div class="t" style="left:1436.2px;top:443.36px;font-size:14.7px;color:#2b3038;font-weight:normal;">Version</div>
<div class="t" style="left:1436.2px;top:472.46px;font-size:14.7px;color:#2b3038;font-weight:normal;">Format</div>
<div class="t" style="left:1436.2px;top:501.26px;font-size:14.7px;color:#2b3038;font-weight:normal;">Version Created</div>
<div class="t" style="right:22.5px;top:446.46px;font-size:14.7px;color:#2b3038;font-weight:normal;">1.0</div>
<div class="t" style="right:22.5px;top:475.26px;font-size:14.7px;color:#2b3038;font-weight:normal;">URL</div>
<div class="t" style="right:22.5px;top:504.26px;font-size:14.7px;color:#2b3038;font-weight:normal;">16 hours ago</div>
<div class="t" style="left:1436.2px;top:536.10px;font-size:15px;color:#2b3038;font-weight:normal;">Offline Permissions</div>
<div style="position:absolute;left:1436px;top:564px;width:446px;height:30px;border:1px solid #c9ced5;border-radius:4px"></div>
<div class="t" style="left:1445.5px;top:573.66px;font-size:13.4px;color:#2b3038;font-weight:normal;">Inherited(Allowed )</div>
<svg style="position:absolute;left:1855px;top:572px" width="20" height="16" viewBox="0 0 20 16" fill="none"><path d="M1.9 4.2L9.9 12.2L17.9 4.2" stroke="#3f464e" stroke-width="1.5"/></svg>
<div style="position:absolute;left:1420px;top:620px;width:480px;height:1px;background:#d3d7de"></div>
<div class="t" style="left:1436.7px;top:641.83px;font-size:17.8px;color:#2b3038;font-weight:bold;">Delivery Options</div>
<svg style="position:absolute;left:1867px;top:643px" width="18" height="14" viewBox="0 0 18 14" fill="none"><path d="M2.5 10.5L9 4L15.5 10.5" stroke="#3f464e" stroke-width="1.6"/></svg>
<div style="position:absolute;left:1436px;top:694px;width:446px;height:74px;border:1px solid #d3d7de;border-radius:8px"></div>
<div style="position:absolute;left:1453px;top:711px;width:40px;height:20px;background:#3d51d6;border-radius:10px"></div>
<div style="position:absolute;left:1476px;top:714px;width:14px;height:14px;background:#fff;border-radius:50%"></div>
<div class="t" style="left:1509.6px;top:714.80px;font-size:14.3px;color:#2b3038;font-weight:bold;">Use custom delivery options</div>
<div class="t" style="left:1509.6px;top:737.39px;font-size:13.6px;color:#2b3038;font-weight:normal;">Configure unique delivery options for this profile only</div>
<div style="position:absolute;left:1436px;top:794px;width:12px;height:12px;border:2px solid #4a5058;border-radius:2px;background:#fff"></div>
<div class="t" style="left:1460.4px;top:793.20px;font-size:15px;color:#2b3038;font-weight:normal;">Select All</div>
<div style="position:absolute;left:1436px;top:823px;width:448px;height:1px;background:#d3d7de"></div>
<div style="position:absolute;left:1436px;top:847px;width:12px;height:12px;border:2px solid #4a5058;border-radius:2px;background:#fff"></div>
<div class="t" style="left:1460.3px;top:847.74px;font-size:14.6px;color:#646b74;font-weight:normal;letter-spacing:0.55px">Download</div>
<div style="position:absolute;left:1660px;top:847px;width:12px;height:12px;border:2px solid #4a5058;border-radius:2px;background:#fff"></div>
<div style="position:absolute;left:1684.4px;top:844.74px;width:199.5px;height:22px;overflow:hidden"><div class="t" style="left:0;top:3px;font-size:14.6px;color:#646b74;letter-spacing:0.12px">Create Shared Link</div></div>
<div style="position:absolute;left:1436px;top:893px;width:12px;height:12px;border:2px solid #4a5058;border-radius:2px;background:#fff"></div>
<div class="t" style="left:1460.3px;top:893.74px;font-size:14.6px;color:#646b74;font-weight:normal;letter-spacing:0.18px">Add to WorkSpace</div>
<div style="position:absolute;left:1660px;top:893px;width:12px;height:12px;border:2px solid #4a5058;border-radius:2px;background:#fff"></div>
<div style="position:absolute;left:1684.4px;top:890.74px;width:199.5px;height:22px;overflow:hidden"><div class="t" style="left:0;top:3px;font-size:14.6px;color:#646b74;letter-spacing:0.15px">Add to Cart</div></div>
<div style="position:absolute;left:1436px;top:939px;width:12px;height:12px;border:2px solid #4a5058;border-radius:2px;background:#fff"></div>
<div class="t" style="left:1460.3px;top:939.74px;font-size:14.6px;color:#646b74;font-weight:normal;letter-spacing:0px">LiveSend</div>
<div style="position:absolute;left:1660px;top:939px;width:12px;height:12px;border:2px solid #4a5058;border-radius:2px;background:#fff"></div>
<div style="position:absolute;left:1684.4px;top:936.74px;width:199.5px;height:22px;overflow:hidden"><div class="t" style="left:0;top:3px;font-size:14.6px;color:#646b74;letter-spacing:0.12px">Generate LiveSend Link</div></div>
<div style="position:absolute;left:1436px;top:985px;width:12px;height:12px;border:2px solid #4a5058;border-radius:2px;background:#fff"></div>
<div class="t" style="left:1460.3px;top:985.74px;font-size:14.6px;color:#646b74;font-weight:normal;letter-spacing:0px">Send By Email Blast</div>
<div style="position:absolute;left:1660px;top:985px;width:12px;height:12px;border:2px solid #4a5058;border-radius:2px;background:#fff"></div>
<div style="position:absolute;left:1684.4px;top:982.74px;width:199.5px;height:22px;overflow:hidden"><div class="t" style="left:0;top:3px;font-size:14.6px;color:#646b74;letter-spacing:-0.15px">Send By SF Email (SFDC only)</div></div>
<div style="position:absolute;left:1436px;top:1031px;width:12px;height:12px;border:2px solid #4a5058;border-radius:2px;background:#fff"></div>
<div class="t" style="left:1460.3px;top:1031.74px;font-size:14.6px;color:#646b74;font-weight:normal;letter-spacing:0px">Post to Chatter (SFDC only)</div>
<div style="position:absolute;left:1660px;top:1031px;width:12px;height:12px;border:2px solid #4a5058;border-radius:2px;background:#fff"></div>
<div style="position:absolute;left:1684.4px;top:1028.74px;width:199.5px;height:22px;overflow:hidden"><div class="t" style="left:0;top:3px;font-size:14.6px;color:#646b74;letter-spacing:0px">Save as Attachment (SFDC only)</div></div>
</body></html>
